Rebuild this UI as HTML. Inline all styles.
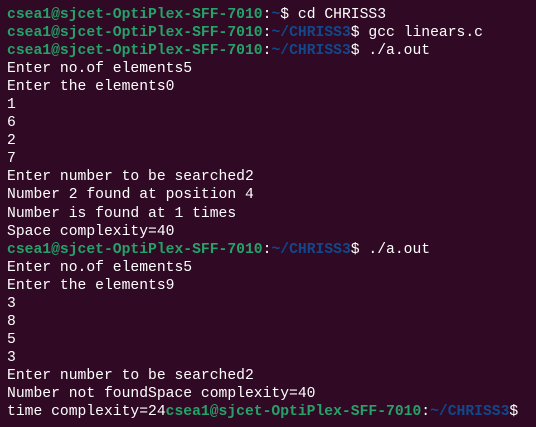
<html><head><style>
body{margin:0;background:#300a24;width:536px;height:427px;overflow:hidden}
pre{margin:0;position:absolute;left:7px;top:6px;font-family:"Liberation Mono",monospace;font-size:14.7px;line-height:18.05px;color:#fff;}
.g{color:#26a269;font-weight:bold}.b{color:#12488b;font-weight:bold}
</style></head><body><pre><span class="g">csea1@sjcet-OptiPlex-SFF-7010</span>:<span class="b">~</span>$ cd CHRISS3
<span class="g">csea1@sjcet-OptiPlex-SFF-7010</span>:<span class="b">~/CHRISS3</span>$ gcc linears.c
<span class="g">csea1@sjcet-OptiPlex-SFF-7010</span>:<span class="b">~/CHRISS3</span>$ ./a.out
Enter no.of elements5
Enter the elements0
1
6
2
7
Enter number to be searched2
Number 2 found at position 4
Number is found at 1 times
Space complexity=40
<span class="g">csea1@sjcet-OptiPlex-SFF-7010</span>:<span class="b">~/CHRISS3</span>$ ./a.out
Enter no.of elements5
Enter the elements9
3
8
5
3
Enter number to be searched2
Number not foundSpace complexity=40
time complexity=24<span class="g">csea1@sjcet-OptiPlex-SFF-7010</span>:<span class="b">~/CHRISS3</span>$</pre></body></html>
